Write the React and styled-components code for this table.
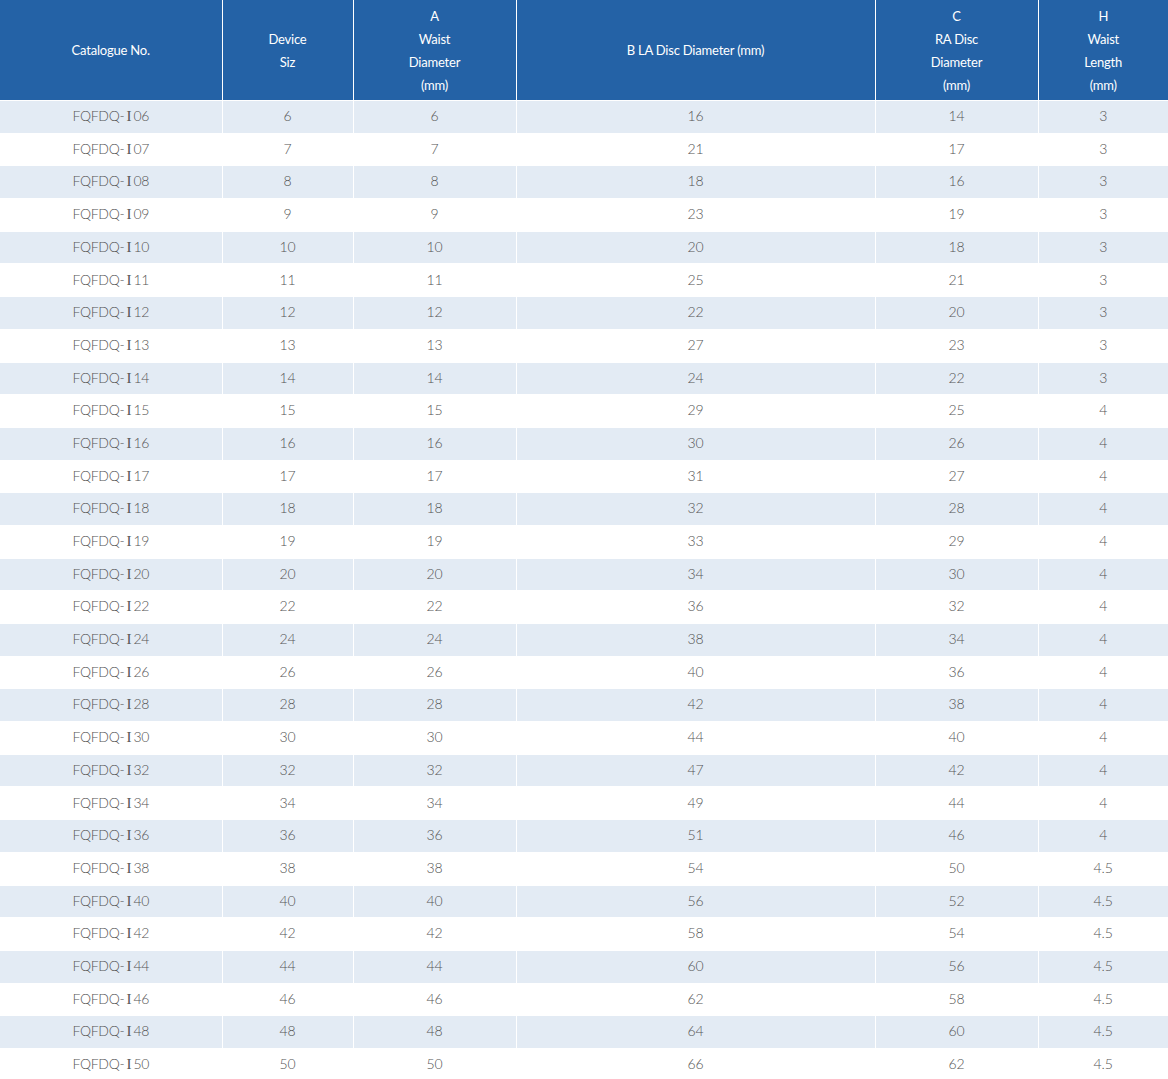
import React from "react";
import styled, { createGlobalStyle } from "styled-components";

const Global = createGlobalStyle`
  html, body { margin: 0; padding: 0; background: #fff; }
  body { font-family: Lato, "Noto Sans", sans-serif; }
`;

const Table = styled.table`
  width: 1168px;
  table-layout: fixed;
  border-collapse: collapse;
  border-style: hidden;
  font-family: Lato, "Noto Sans", sans-serif;
  font-size: 14px;
`;

const Th = styled.th`
  background: #2462a6;
  color: #fff;
  font-size: 13px;
  font-weight: 400;
  letter-spacing: -0.2px;
  line-height: 23px;
  padding: 4.5px 4px 3.5px;
  height: 92px;
  border: 1px solid #fff;
  text-align: center;
  vertical-align: middle;
`;

const Row = styled.tr`
  background: ${(p) => (p.$striped ? "#e3ebf4" : "#ffffff")};
`;

const Td = styled.td`
  color: #555;
  font-weight: 300;
  text-align: center;
  line-height: 21px;
  padding: 4.1px 4px 6.6px;
  border: 1px solid #fff;
`;

const CatCode = styled.span`
  letter-spacing: -0.3px;
`;

const SerifI = styled.span`
  font-family: "Liberation Serif", "DejaVu Serif", serif;
  font-weight: 400;
  font-size: 15px;
  line-height: 0;
  letter-spacing: 0;
  margin: 0 2px 0 2px;
`;

const widths = [222, 131, 163, 359, 163, 130];

const headers = [
  ["Catalogue No."],
  ["Device", "Siz"],
  ["A", "Waist", "Diameter", "(mm)"],
  ["B LA Disc Diameter (mm)"],
  ["C", "RA Disc", "Diameter", "(mm)"],
  ["H", "Waist", "Length", "(mm)"],
];

const data = [
  [6, 16, 14, "3"],
  [7, 21, 17, "3"],
  [8, 18, 16, "3"],
  [9, 23, 19, "3"],
  [10, 20, 18, "3"],
  [11, 25, 21, "3"],
  [12, 22, 20, "3"],
  [13, 27, 23, "3"],
  [14, 24, 22, "3"],
  [15, 29, 25, "4"],
  [16, 30, 26, "4"],
  [17, 31, 27, "4"],
  [18, 32, 28, "4"],
  [19, 33, 29, "4"],
  [20, 34, 30, "4"],
  [22, 36, 32, "4"],
  [24, 38, 34, "4"],
  [26, 40, 36, "4"],
  [28, 42, 38, "4"],
  [30, 44, 40, "4"],
  [32, 47, 42, "4"],
  [34, 49, 44, "4"],
  [36, 51, 46, "4"],
  [38, 54, 50, "4.5"],
  [40, 56, 52, "4.5"],
  [42, 58, 54, "4.5"],
  [44, 60, 56, "4.5"],
  [46, 62, 58, "4.5"],
  [48, 64, 60, "4.5"],
  [50, 66, 62, "4.5"],
];

const pad = (n) => (n < 10 ? "0" + n : String(n));

export default function App() {
  return (
    <>
      <Global />
      <Table>
        <colgroup>
          {widths.map((w, i) => (
            <col key={i} style={{ width: w }} />
          ))}
        </colgroup>
        <thead>
          <tr>
            {headers.map((lines, i) => (
              <Th key={i}>
                {lines.map((l, j) => (
                  <React.Fragment key={j}>
                    {j > 0 && <br />}
                    {l}
                  </React.Fragment>
                ))}
              </Th>
            ))}
          </tr>
        </thead>
        <tbody>
          {data.map(([s, b, c, h], i) => (
            <Row key={i} $striped={i % 2 === 0}>
              <Td>
                <CatCode>
                  FQFDQ-<SerifI>I</SerifI>{pad(s)}
                </CatCode>
              </Td>
              <Td>{s}</Td>
              <Td>{s}</Td>
              <Td>{b}</Td>
              <Td>{c}</Td>
              <Td>{h}</Td>
            </Row>
          ))}
        </tbody>
      </Table>
    </>
  );
}
